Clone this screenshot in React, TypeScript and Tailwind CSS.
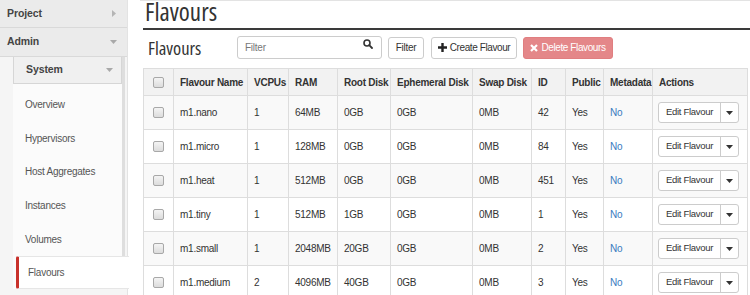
import React from 'react';

type Flavour = {
  name: string;
  vcpus: number;
  ram: string;
  root: string;
  eph: string;
  swap: string;
  id: string;
};

const flavours: Flavour[] = [
  { name: 'm1.nano', vcpus: 1, ram: '64MB', root: '0GB', eph: '0GB', swap: '0MB', id: '42' },
  { name: 'm1.micro', vcpus: 1, ram: '128MB', root: '0GB', eph: '0GB', swap: '0MB', id: '84' },
  { name: 'm1.heat', vcpus: 1, ram: '512MB', root: '0GB', eph: '0GB', swap: '0MB', id: '451' },
  { name: 'm1.tiny', vcpus: 1, ram: '512MB', root: '1GB', eph: '0GB', swap: '0MB', id: '1' },
  { name: 'm1.small', vcpus: 1, ram: '2048MB', root: '20GB', eph: '0GB', swap: '0MB', id: '2' },
  { name: 'm1.medium', vcpus: 2, ram: '4096MB', root: '40GB', eph: '0GB', swap: '0MB', id: '3' },
];

const navItems = ['Overview', 'Hypervisors', 'Host Aggregates', 'Instances', 'Volumes'];

const Checkbox = () => (
  <span className="inline-block w-[11px] h-[11px] rounded-[2px] border border-[#a8a8a8] bg-gradient-to-b from-[#f4f4f4] to-[#dcdcdc]" />
);

const CaretDown = () => (
  <svg className="shrink-0" width="7" height="4" viewBox="0 0 7 4">
    <path d="M0 0h7L3.5 4z" fill="currentColor" />
  </svg>
);

const CaretRight = () => (
  <svg className="shrink-0" width="4" height="7" viewBox="0 0 4 7">
    <path d="M0 0v7l4-3.5z" fill="currentColor" />
  </svg>
);

const cols = [
  { label: '', w: 'w-[30px]' },
  { label: 'Flavour Name', w: 'w-[74px]' },
  { label: 'VCPUs', w: 'w-[41px]' },
  { label: 'RAM', w: 'w-[49px]' },
  { label: 'Root Disk', w: 'w-[53px]' },
  { label: 'Ephemeral Disk', w: 'w-[82px]' },
  { label: 'Swap Disk', w: 'w-[59px]' },
  { label: 'ID', w: 'w-[34px]' },
  { label: 'Public', w: 'w-[38px]' },
  { label: 'Metadata', w: 'w-[49px]' },
  { label: 'Actions', w: 'w-[95px]' },
];

const App: React.FC = () => {
  return (
    <div className="flex w-[750px] h-[295px] overflow-hidden bg-white font-['Liberation_Sans',Arial,sans-serif] text-[10px] tracking-[-0.25px] text-[#333]">
      {/* sidebar */}
      <div className="w-[140px] shrink-0">
        <div className="w-[128px] h-[295px] bg-[#f5f5f5] border-r border-[#e3e3e3]">
          <div className="h-[28px] flex items-center justify-between pl-[7px] pr-[11px] bg-[#ebebeb] border-b border-[#d9d9d9] text-[10.5px] tracking-[-0.1px] font-bold text-[#444]">
            <span>Project</span>
            <span className="text-[#b5b5b5]"><CaretRight /></span>
          </div>
          <div className="h-[29px] flex items-center justify-between pl-[7px] pr-[10px] bg-[#ebebeb] border-b border-[#d9d9d9] text-[10.5px] tracking-[-0.1px] font-bold text-[#444]">
            <span>Admin</span>
            <span className="text-[#a9a9a9]"><CaretDown /></span>
          </div>
          <div className="ml-[13px] w-[112px] bg-[#fbfbfb] border-r-[3px] border-[#dedede]">
            <div className="h-[27px] flex items-center justify-between pl-[12px] pr-[8px] bg-[#f0f0f0] border border-t-0 border-[#d6d6d6] text-[10.5px] tracking-[-0.1px] font-bold text-[#444]">
              <span>System</span>
              <span className="text-[#a9a9a9]"><CaretDown /></span>
            </div>
            <div className="pt-[4px]">
              {navItems.map((item) => (
                <div key={item} className="h-[33.6px] flex items-center pl-[12px] text-[#555]">
                  {item}
                </div>
              ))}
              <div className="relative ml-[3px] w-[113px] h-[33px] flex items-center pl-[9px] bg-white border-l-[3px] border-[#c8312b] border-y border-y-[#e6e6e6] rounded-l-[2px] text-[#555]">
                Flavours
              </div>
            </div>
          </div>
        </div>
      </div>

      {/* main */}
      <div className="flex-1 min-w-0 border-t border-[#e3e3e3]">
        <div className="ml-[3px] pl-[2px] h-[30px] border-b-2 border-[#3a3a3a]">
          <h1 className="font-['Open_Sans',sans-serif] [font-stretch:75%] text-[25px] leading-[22px] tracking-normal text-[#333] -mt-[1px]">
            Flavours
          </h1>
        </div>

        <div className="flex items-center h-[23px] mt-[6px] ml-[8px]">
          <h3 className="w-[89px] font-['Open_Sans',sans-serif] [font-stretch:85%] text-[18.5px] leading-[22px] tracking-normal text-[#333]">
            Flavours
          </h3>
          <div className="relative w-[145px] h-[23px] border border-[#ccc] rounded-[3px] flex items-center pl-[7px] text-[#777]">
            Filter
            <svg className="absolute right-[8px] top-[2px]" width="10" height="10" viewBox="0 0 10 10">
              <circle cx="4" cy="4" r="3" fill="none" stroke="#333" strokeWidth="1.6" />
              <path d="M6.2 6.2L9 9" stroke="#333" strokeWidth="1.8" strokeLinecap="round" />
            </svg>
          </div>
          <button className="ml-[6px] w-[36px] h-[22px] border border-[#ccc] rounded-[3px] bg-white text-[#333]">
            Filter
          </button>
          <button className="ml-[7px] w-[86px] h-[22px] border border-[#ccc] rounded-[3px] bg-white text-[#333] flex items-center justify-center gap-[3px] whitespace-nowrap tracking-[-0.4px]">
            <svg className="shrink-0" width="9" height="9" viewBox="0 0 9 9">
              <path d="M3.3 0h2.4v3.3H9v2.4H5.7V9H3.3V5.7H0V3.3h3.3z" fill="#222" />
            </svg>
            Create Flavour
          </button>
          <button className="ml-[6px] w-[90px] h-[22px] border border-[#e07e80] rounded-[3px] bg-[#e48789] text-white flex items-center justify-center gap-[3px] whitespace-nowrap tracking-[-0.4px]">
            <svg className="shrink-0" width="8" height="8" viewBox="0 0 8 8">
              <path d="M1 1l6 6M7 1L1 7" stroke="#fff" strokeWidth="2.2" />
            </svg>
            Delete Flavours
          </button>
        </div>

        <table className="ml-[3px] mt-[9px] w-[604px] table-fixed border-collapse">
          <thead>
            <tr className="h-[27px] bg-[#f2f2f2]">
              {cols.map((c, i) => (
                <th
                  key={i}
                  className={`${c.w} border border-[#ddd] px-[6px] text-left font-bold whitespace-nowrap overflow-hidden`}
                >
                  {i === 0 ? <span className="flex justify-center"><Checkbox /></span> : c.label}
                </th>
              ))}
            </tr>
          </thead>
          <tbody>
            {flavours.map((f, r) => (
              <tr key={f.name} className={`h-[34px] ${r % 2 === 0 ? 'bg-[#f9f9f9]' : 'bg-white'}`}>
                <td className="border border-[#ddd]">
                  <span className="flex justify-center"><Checkbox /></span>
                </td>
                <td className="border border-[#ddd] px-[6px]">{f.name}</td>
                <td className="border border-[#ddd] px-[6px]">{f.vcpus}</td>
                <td className="border border-[#ddd] px-[6px]">{f.ram}</td>
                <td className="border border-[#ddd] px-[6px]">{f.root}</td>
                <td className="border border-[#ddd] px-[6px]">{f.eph}</td>
                <td className="border border-[#ddd] px-[6px]">{f.swap}</td>
                <td className="border border-[#ddd] px-[6px]">{f.id}</td>
                <td className="border border-[#ddd] px-[6px]">Yes</td>
                <td className="border border-[#ddd] px-[6px] text-[#3a7bbf]">No</td>
                <td className="border border-[#ddd] px-[5px]">
                  <div className="flex h-[21px] w-[81px] border border-[#ccc] rounded-[3px] bg-white">
                    <span className="w-[62px] flex items-center justify-center border-r border-[#ccc] whitespace-nowrap text-[9.5px] tracking-[-0.3px]">
                      Edit Flavour
                    </span>
                    <span className="flex-1 flex items-center justify-center text-[#333]">
                      <CaretDown />
                    </span>
                  </div>
                </td>
              </tr>
            ))}
          </tbody>
        </table>
      </div>
    </div>
  );
};

export default App;
